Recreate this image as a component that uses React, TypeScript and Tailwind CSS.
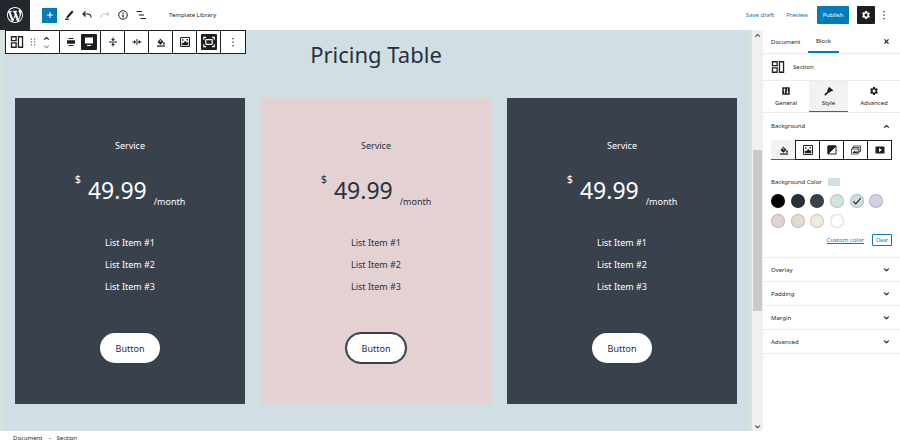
import type { ReactNode } from 'react';
import clsx from 'clsx';
import { MdSettings } from 'react-icons/md';

type IconProps = { className?: string };

function Icon({ className = 'size-3', children }: { className?: string; children: ReactNode }) {
  return (
    <svg viewBox="0 0 24 24" fill="none" stroke="currentColor" strokeWidth="2" className={clsx('shrink-0', className)} aria-hidden="true">
      {children}
    </svg>
  );
}

function WordPressIcon() {
  return (
    <svg viewBox="0 0 20 20" fill="currentColor" className="size-4" aria-hidden="true">
      <path d="M20 10c0-5.51-4.49-10-10-10C4.48 0 0 4.49 0 10c0 5.52 4.48 10 10 10 5.51 0 10-4.48 10-10zM7.78 15.37L4.37 6.22c.55-.02 1.17-.08 1.17-.08.5-.06.44-1.13-.06-1.11 0 0-1.45.11-2.37.11-.18 0-.37 0-.58-.01C4.12 2.69 6.87 1.11 10 1.11c2.33 0 4.45.87 6.05 2.34-.68-.11-1.65.39-1.65 1.58 0 .74.45 1.36.9 2.1.35.61.55 1.36.55 2.46 0 1.49-1.4 5-1.4 5l-3.03-8.37c.54-.02.82-.17.82-.17.5-.05.44-1.25-.06-1.22 0 0-1.44.12-2.38.12-.87 0-2.33-.12-2.33-.12-.5-.03-.56 1.2-.06 1.22l.92.08 1.26 3.41zM17.41 10c.24-.64.74-1.87.43-4.25.7 1.29 1.05 2.71 1.05 4.25 0 3.29-1.73 6.24-4.4 7.78.97-2.59 1.94-5.2 2.92-7.78zM6.1 18.09C3.12 16.65 1.11 13.53 1.11 10c0-1.3.23-2.48.72-3.59C3.25 10.3 4.67 14.2 6.1 18.09zm4.03-6.63l2.58 6.98c-.86.29-1.76.45-2.71.45-.79 0-1.57-.11-2.29-.33.81-2.38 1.62-4.74 2.42-7.1z" />
    </svg>
  );
}

function SectionIcon({ className }: IconProps) {
  return (
    <Icon className={className}>
      <path d="M2.500 3h8v6.500h-8zM2.500 13.500h8V21h-8zM14.500 3h7v18h-7z" strokeWidth="2.200" />
    </Icon>
  );
}

function ChevronIcon({ up = false, className = 'size-[7px]' }: IconProps & { up?: boolean }) {
  return (
    <Icon className={className}>
      <path d={up ? 'M4 16l8-7 8 7' : 'M4 9l8 7 8-7'} strokeWidth="4" />
    </Icon>
  );
}

function DotsIcon() {
  return (
    <Icon>
      <path d="M12 4v2.500M12 11v2.500M12 18v2.500" strokeWidth="2.500" />
    </Icon>
  );
}

function BucketIcon({ className }: IconProps) {
  return (
    <Icon className={className}>
      <path d="M9 4l8 7.500-6 6L5 12l5-5.500z" fill="currentColor" stroke="none" />
      <path d="M9 11h4.500L11 8z" fill="#fff" stroke="none" />
      <path d="M18 12c1.200 1.800 1.800 2.600 1.800 3.500a1.800 1.800 0 0 1-3.600 0c0-.9.6-1.700 1.800-3.500z" fill="currentColor" stroke="none" />
      <path d="M4 20h16" strokeWidth="2.500" />
    </Icon>
  );
}

function ImageIcon({ className }: IconProps) {
  return (
    <Icon className={className}>
      <path d="M3 3h18v18H3z" />
      <path d="M5.500 18.500v-6l3 2 4-5 3 4 3-2v7z" fill="currentColor" stroke="none" />
      <path d="M6 6.500h3v3H6zM15 6h3v3h-3z" fill="currentColor" stroke="none" />
    </Icon>
  );
}

function GradientIcon() {
  return (
    <Icon>
      <path d="M4 4h16v16H4z" />
      <path d="M4 4h16L4 20z" fill="currentColor" />
    </Icon>
  );
}

function GalleryIcon() {
  return (
    <Icon>
      <path d="M7 7V4h14v11h-3" strokeWidth="1.500" />
      <path d="M5 10V7h13v11h-2" strokeWidth="1.500" />
      <path d="M3 10h13v10H3z" strokeWidth="1.500" />
      <path d="M5 18l4-5 3 3 2-2 1 4z" fill="currentColor" stroke="none" />
    </Icon>
  );
}

function VideoIcon() {
  return (
    <Icon>
      <rect x="3" y="5" width="18" height="14" rx="1" fill="currentColor" stroke="none" />
      <path d="M10 8l6 4-6 4z" fill="#fff" stroke="none" />
    </Icon>
  );
}

function SlidersIcon() {
  return (
    <Icon className="size-[10px]">
      <rect x="3" y="3" width="18" height="18" rx="1" fill="currentColor" stroke="none" />
      <path d="M8.500 6v12M15.500 6v12M6 9.500h5M13 15h5" stroke="#fff" />
    </Icon>
  );
}

function BrushIcon() {
  return (
    <Icon className="size-[10px]">
      <path d="M12 2l10 8-3 3-2-1-5 5-5-5 3-5z" fill="currentColor" stroke="none" />
      <path d="M10 14l-8 8" strokeWidth="4" />
    </Icon>
  );
}

const cards = [
  { id: 'left', dark: true, outlined: false },
  { id: 'middle', dark: false, outlined: true },
  { id: 'right', dark: true, outlined: false },
];

const items = ['List Item #1', 'List Item #2', 'List Item #3'];

const swatches = [
  { name: 'Black', color: 'bg-black' },
  { name: 'Navy', color: 'bg-[#28303d]' },
  { name: 'Slate', color: 'bg-[#39414d]' },
  { name: 'Green', color: 'bg-[#d1e4dd]' },
  { name: 'Blue', color: 'bg-[#d1dfe4]', selected: true },
  { name: 'Purple', color: 'bg-[#d1d1e4]' },
  { name: 'Red', color: 'bg-[#e4d1d1]' },
  { name: 'Orange', color: 'bg-[#e4dad1]' },
  { name: 'Yellow', color: 'bg-[#eeeadd]' },
  { name: 'White', color: 'bg-white' },
];

const backgroundTypes = [
  { name: 'Color', icon: <BucketIcon />, active: true },
  { name: 'Image', icon: <ImageIcon /> },
  { name: 'Gradient', icon: <GradientIcon /> },
  { name: 'Slider', icon: <GalleryIcon /> },
  { name: 'Video', icon: <VideoIcon /> },
];

function Header() {
  return (
    <header className="flex h-[30px] shrink-0 items-center justify-between bg-white pr-[10px]">
      <div className="flex h-full items-center">
        <a href="#" aria-label="View posts" className="flex size-[30px] items-center justify-center bg-[#23282e] text-white">
          <WordPressIcon />
        </a>
        <div className="ml-3 flex items-center gap-[6px]">
          <button aria-label="Add block" className="flex size-[15px] items-center justify-center bg-[#007cba] text-white">
            <Icon className="size-[10px]">
              <path d="M12 5v14M5 12h14" strokeWidth="2.500" />
            </Icon>
          </button>
          <button aria-label="Edit">
            <Icon>
              <path d="M18 3l3 3-10 11-5 2 2-5z" fill="currentColor" stroke="none" />
              <path d="M4 20.500h8" strokeWidth="2.500" />
            </Icon>
          </button>
          <button aria-label="Undo">
            <Icon>
              <path d="M9 5l-5 5 5 5M4 10h10c5 0 6 3 6 7" strokeWidth="2.200" />
            </Icon>
          </button>
          <button aria-label="Redo" className="text-[#b8bbbe]">
            <Icon>
              <path d="M15 5l5 5-5 5M20 10H10c-5 0-6 3-6 7" />
            </Icon>
          </button>
          <button aria-label="Details">
            <Icon>
              <circle cx="12" cy="12" r="8.500" />
              <path d="M12 7v2.500M12 11v6" strokeWidth="2.500" />
            </Icon>
          </button>
          <button aria-label="Block navigation">
            <Icon>
              <path d="M3 5h11M8 12h10M11 19h11" strokeWidth="2.200" />
            </Icon>
          </button>
        </div>
        <span className="ml-[22px]">Template Library</span>
      </div>
      <div className="flex items-center text-[#007cba]">
        <button>Save draft</button>
        <button className="ml-3">Preview</button>
        <button className="ml-[9px] h-[18px] w-8 rounded-[1px] bg-[#007cba] text-white">Publish</button>
        <button aria-label="Settings" className="ml-2 flex size-[18px] items-center justify-center rounded-[1px] bg-[#1e1e1e] text-white">
          <MdSettings className="size-[10px]" />
        </button>
        <button aria-label="Options" className="ml-[3px] text-[#1e1e1e]">
          <DotsIcon />
        </button>
      </div>
    </header>
  );
}

function ToolbarButton({ label, active = false, children }: { label: string; active?: boolean; children: ReactNode }) {
  return (
    <button
      aria-label={label}
      className={clsx('flex size-4 items-center justify-center rounded-[1px]', active && 'bg-[#1e1e1e] text-white')}
    >
      {children}
    </button>
  );
}

function BlockToolbar() {
  return (
    <div role="toolbar" aria-label="Block tools" className="absolute top-0 left-[5px] flex h-6 divide-x divide-[#1e1e1e] border border-[#1e1e1e] bg-white">
      <div className="flex w-[54px] items-center gap-[5px] pl-1">
        <button aria-label="Section">
          <SectionIcon className="size-[14px]" />
        </button>
        <button aria-label="Drag">
          <Icon className="h-3 w-2">
            <path d="M7 2v3M7 10.500v3M7 19v3M17 2v3M17 10.500v3M17 19v3" strokeWidth="3" />
          </Icon>
        </button>
        <span className="flex flex-col gap-px pl-px">
          <button aria-label="Move up">
            <ChevronIcon up />
          </button>
          <button aria-label="Move down" className="text-[#8d9096]">
            <ChevronIcon />
          </button>
        </span>
      </div>
      <div className="flex w-[41px] items-center gap-[2px] pl-[3px]">
        <ToolbarButton label="Align">
          <Icon>
            <path d="M7 5h10M7 19h10" />
            <path d="M4 8.500h16v7H4z" fill="currentColor" stroke="none" />
          </Icon>
        </ToolbarButton>
        <ToolbarButton label="Full width" active>
          <Icon>
            <path d="M4 3h16v12H4z" fill="currentColor" stroke="none" />
            <path d="M8 19h8" />
          </Icon>
        </ToolbarButton>
      </div>
      <div className="flex w-6 items-center justify-center">
        <ToolbarButton label="Vertical spacing">
          <Icon>
            <path d="M4 12h16M12 3v6M12 15v6" />
            <path d="M8 6l4 4 4-4zM8 18l4-4 4 4z" fill="currentColor" stroke="none" />
          </Icon>
        </ToolbarButton>
      </div>
      <div className="flex w-6 items-center justify-center">
        <ToolbarButton label="Horizontal spacing">
          <Icon>
            <path d="M12 6v12M3 12h6M15 12h6" />
            <path d="M6 8l4 4-4 4zM18 8l-4 4 4 4z" fill="currentColor" stroke="none" />
          </Icon>
        </ToolbarButton>
      </div>
      <div className="flex w-6 items-center justify-center">
        <ToolbarButton label="Background color">
          <BucketIcon />
        </ToolbarButton>
      </div>
      <div className="flex w-6 items-center justify-center">
        <ToolbarButton label="Background image">
          <ImageIcon />
        </ToolbarButton>
      </div>
      <div className="flex w-6 items-center justify-center">
        <ToolbarButton label="Full height" active>
          <Icon className="size-[14px]">
            <path d="M3 8V4h4M17 4h4v4M21 16v4h-4M7 20H3v-4" />
            <rect x="6.500" y="8" width="11" height="8" rx="1" />
          </Icon>
        </ToolbarButton>
      </div>
      <div className="flex w-6 items-center justify-center">
        <ToolbarButton label="More options">
          <DotsIcon />
        </ToolbarButton>
      </div>
    </div>
  );
}

function PricingCard({ dark, outlined }: { dark: boolean; outlined: boolean }) {
  return (
    <article
      className={clsx(
        'flex flex-col items-center pt-10 pb-[41px] text-[9px]',
        dark ? 'bg-[#39414d] text-white' : 'bg-[#e4d1d1] text-[#28303d]'
      )}
    >
      <h3 className="leading-4">Service</h3>
      <p className="mt-4 flex h-10 items-center gap-[7px]">
        <span className="self-start text-[11px] leading-[18px]">$</span>
        <span className="text-[23px] leading-9">49.99</span>
        <span className="self-end leading-4">/month</span>
      </p>
      <ul className="mt-[22px] text-center leading-[22px]">
        {items.map((item) => (
          <li key={item}>{item}</li>
        ))}
      </ul>
      <button
        className={clsx(
          'mt-[35px] h-[30px] w-[60px] rounded-full bg-white pt-[2px] text-[#28303d]',
          outlined && 'border border-[#39414d] ring-1 ring-[#39414d]'
        )}
      >
        Button
      </button>
    </article>
  );
}

function Canvas() {
  return (
    <main className="relative flex min-w-0 flex-1">
      <section className="flex-1 border-x-4 border-[#d1e4dd] bg-[#d1dfe4] px-[11px]">
        <h2 className="pt-[6px] text-center text-[22px] leading-9 text-[#28303d]">Pricing Table</h2>
        <div className="mt-[26px] grid grid-cols-3 gap-4">
          {cards.map((card) => (
            <PricingCard key={card.id} dark={card.dark} outlined={card.outlined} />
          ))}
        </div>
      </section>
      <div className="flex w-[11px] flex-col items-center bg-[#f0f0f0] text-[#505050]">
        <span className="flex h-[10px] items-center">
          <ChevronIcon up />
        </span>
        <div className="flex w-full flex-1 flex-col">
          <div className="grow-[11]" />
          <div className="mx-px grow-[16] bg-[#c9c9c9]" />
          <div className="grow-[11]" />
        </div>
        <span className="flex h-[10px] items-center">
          <ChevronIcon />
        </span>
      </div>
      <BlockToolbar />
    </main>
  );
}

function Panel({ title }: { title: string }) {
  return (
    <button className="flex h-6 w-full items-center justify-between border-b border-[#ececec] pr-[10px] pl-2">
      {title}
      <ChevronIcon />
    </button>
  );
}

function Sidebar() {
  return (
    <aside className="w-[137px] shrink-0 bg-white">
      <div className="flex h-6 items-stretch border-b border-[#ececec] pr-[10px]">
        <button className="w-[45px]">Document</button>
        <button className="w-[31px] border-b-2 border-[#007cba]">Block</button>
        <button aria-label="Close settings" className="ml-auto">
          <Icon className="size-[7px]">
            <path d="M5 5l14 14M19 5L5 19" strokeWidth="4" />
          </Icon>
        </button>
      </div>
      <div className="flex h-[27px] items-center gap-2 border-b border-[#ececec] px-2">
        <SectionIcon className="size-[14px]" />
        <span>Section</span>
      </div>
      <div className="grid h-8 grid-cols-[46px_39px_1fr] border-b border-[#ececec]">
        <button className="flex flex-col items-center justify-center gap-[3px]">
          <SlidersIcon />
          General
        </button>
        <button className="flex flex-col items-center justify-center gap-[3px] border-b border-[#007cba] bg-[#f0f2f4]">
          <BrushIcon />
          Style
        </button>
        <button className="flex flex-col items-center justify-center gap-[3px]">
          <MdSettings className="size-[10px]" />
          Advanced
        </button>
      </div>
      <section className="border-b border-[#ececec] px-2 pb-[11px]">
        <button className="flex h-[26px] w-full items-center justify-between pr-[2px]">
          Background
          <ChevronIcon up />
        </button>
        <div className="mt-px flex">
          {backgroundTypes.map(({ name, icon, active }) => (
            <button
              key={name}
              aria-label={name}
              className={clsx(
                'flex h-5 items-center justify-center',
                active ? 'w-[25px] border-b border-[#007cba] bg-[#f0f2f4]' : '-ml-px flex-1 border border-[#1e1e1e]'
              )}
            >
              {icon}
            </button>
          ))}
        </div>
        <div className="mt-4 flex h-3 items-center gap-[6px]">
          Background Color
          <span className="h-2 w-3 bg-[#d1dfe4]" />
        </div>
        <div className="mt-[6px] grid w-[118px] grid-cols-6 gap-y-[6px]">
          {swatches.map(({ name, color, selected }) => (
            <button
              key={name}
              aria-label={name}
              className={clsx('flex size-[14px] items-center justify-center rounded-full border border-black/15', color)}
            >
              {selected && (
                <Icon className="size-[10px]">
                  <path d="M3 13l6 6L21 5" strokeWidth="2.500" />
                </Icon>
              )}
            </button>
          ))}
        </div>
        <div className="mt-[6px] flex items-center justify-end gap-2 text-[#007cba]">
          <a href="#" className="underline">
            Custom color
          </a>
          <button className="h-3 w-5 rounded-[1px] border border-[#007cba] text-[5px]">Clear</button>
        </div>
      </section>
      <Panel title="Overlay" />
      <Panel title="Padding" />
      <Panel title="Margin" />
      <Panel title="Advanced" />
    </aside>
  );
}

export default function App() {
  return (
    <div className="flex min-h-screen flex-col bg-white font-['Noto_Sans',sans-serif] text-[6px] leading-2 text-[#1e1e1e]">
      <Header />
      <div className="flex flex-1">
        <Canvas />
        <Sidebar />
      </div>
      <footer className="flex h-3 shrink-0 items-center gap-1 pt-[2px] pl-[13px]">
        <a href="#">Document</a>
        <span>→</span>
        <span>Section</span>
      </footer>
    </div>
  );
}
